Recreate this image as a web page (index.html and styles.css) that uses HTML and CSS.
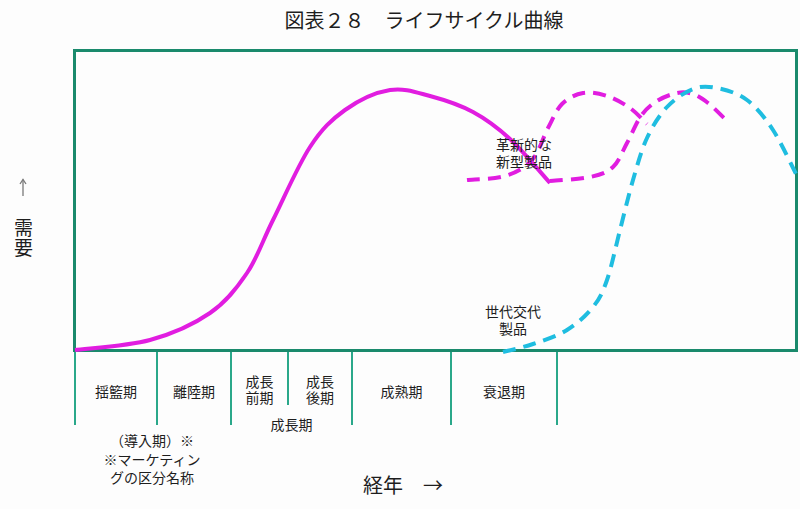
FILE: index.html
```html
<!DOCTYPE html>
<html lang="ja">
<head>
<meta charset="utf-8">
<title>図表２８　ライフサイクル曲線</title>
<link rel="stylesheet" href="styles.css">
</head>
<body>
<div class="page">
  <h1 class="title">図表２８　ライフサイクル曲線</h1>
  <div class="chart-row">
    <div class="yaxis">
      <svg class="yarrow" width="10" height="18" viewBox="0 0 10 18" xmlns="http://www.w3.org/2000/svg">
        <line x1="5" y1="1.5" x2="5" y2="18"/>
        <polyline points="2,6 5,1.5 8,6"/>
      </svg>
      <span class="ylabel">需<br>要</span>
    </div>
    <div class="plot">
      <svg class="curves" width="725" height="303" viewBox="73 49 725 303" xmlns="http://www.w3.org/2000/svg">
        <path class="solid" d="M75,350 C87.5,348.3 127.5,346.2 150,340 C172.5,333.8 193.8,324.2 210,313 C226.2,301.8 236.5,288.5 247,273 C257.5,257.5 262.5,241 273,220 C283.5,199 298,165.3 310,147 C322,128.7 331.7,119.5 345,110 C358.3,100.5 375.8,92.3 390,90 C404.2,87.7 416.2,92.3 430,96 C443.8,99.7 459.7,104.8 473,112 C486.3,119.2 497.2,127.2 510,139 C522.8,150.8 543.3,175.7 550,183"/>
        <path class="dash-m" d="M467,180 C473.3,179.3 494.2,179.3 505,176 C515.8,172.7 524.8,168 532,160 C539.2,152 543,137.3 548,128 C553,118.7 556.2,109.8 562,104 C567.8,98.2 575.5,94.3 583,93 C590.5,91.7 599.2,93.5 607,96 C614.8,98.5 623.3,103.3 630,108 C636.7,112.7 644.2,121.3 647,124"/>
        <path class="dash-m" d="M550,181 C556.7,180.3 579.5,179.3 590,177 C600.5,174.7 606.8,172.7 613,167 C619.2,161.3 622.3,151.5 627,143 C631.7,134.5 636,123 641,116 C646,109 651,104.8 657,101 C663,97.2 671,94.2 677,93 C683,91.8 687.8,92.3 693,94 C698.2,95.7 702.8,99 708,103 C713.2,107 721.3,115.5 724,118"/>
        <path class="dash-c" d="M503,352 C508,350.7 522.3,347.7 533,344 C543.7,340.3 557,336.2 567,330 C577,323.8 586.3,315.3 593,307 C599.7,298.7 602.5,292.8 607,280 C611.5,267.2 615.7,246.7 620,230 C624.3,213.3 628.5,195.3 633,180 C637.5,164.7 641.3,150.2 647,138 C652.7,125.8 659.3,115.2 667,107 C674.7,98.8 684.7,92.2 693,89 C701.3,85.8 708,86.2 717,88 C726,89.8 737.7,93 747,100 C756.3,107 764.5,117 773,130 C781.5,143 793.8,170 798,178"/>
      </svg>
      <div class="tag tag-innov">革新的な<br>新型製品</div>
      <div class="tag tag-gen">世代交代<br>製品</div>
    </div>
  </div>
  <div class="stages">
    <div class="stage stage-cradle">揺籃期</div>
    <div class="stage stage-takeoff">離陸期</div>
    <div class="stage stage-growth">
      <div class="growth-sub">
        <div class="sub sub-early">成長<br>前期</div>
        <div class="sub sub-late">成長<br>後期</div>
      </div>
      <div class="growth-label">成長期</div>
    </div>
    <div class="stage stage-mature">成熟期</div>
    <div class="stage stage-decline">衰退期</div>
  </div>
  <div class="bottom">
    <div class="footnote">（導入期）※<br>※マーケティン<br>グの区分名称</div>
    <div class="xlabel">経年　→</div>
  </div>
</div>
</body>
</html>
```

FILE: styles.css
```css
html, body {
  margin: 0;
  padding: 0;
  background: #ffffff;
}

body {
  font-family: "Noto Sans CJK JP", "Noto Sans", sans-serif;
  color: #222222;
}

.page {
  width: 800px;
  height: 509px;
  overflow: hidden;
  background: #fdfdfd;
}

.title {
  margin: 0;
  height: 49px;
  padding: 7px 0 0 48px;
  box-sizing: border-box;
  font-size: 20px;
  font-weight: normal;
  line-height: 26px;
  text-align: center;
  color: #1e1e1e;
}

.chart-row {
  display: flex;
  height: 303px;
}

.yaxis {
  width: 73px;
  display: flex;
  flex-direction: column;
  align-items: flex-start;
  padding: 129px 0 0 14px;
  box-sizing: border-box;
}

.yarrow {
  display: block;
  margin-left: 4px;
  fill: none;
  stroke: #7a7a7a;
  stroke-width: 1.3;
}

.ylabel {
  margin-top: 21px;
  font-size: 19px;
  line-height: 20px;
  color: #1e1e1e;
}

.plot {
  position: relative;
  width: 725px;
  height: 303px;
  border: 3px solid #1a8a6c;
  box-sizing: border-box;
}

.curves {
  position: absolute;
  left: -3px;
  top: -3px;
  overflow: visible;
}

.curves path {
  fill: none;
  stroke-width: 4;
  stroke-linecap: butt;
}

.curves .solid {
  stroke: #e11de0;
}

.curves .dash-m {
  stroke: #e11de0;
  stroke-dasharray: 13 8;
}

.curves .dash-c {
  stroke: #1fbde0;
  stroke-dasharray: 13 8;
}

.tag {
  position: absolute;
  font-size: 14px;
  line-height: 17px;
  text-align: center;
  color: #1e1e1e;
}

.tag-innov {
  left: 420px;
  top: 84px;
}

.tag-gen {
  left: 409px;
  top: 251px;
}

.stages {
  display: flex;
  margin-left: 74px;
  height: 73px;
}

.stage {
  border-left: 2px solid #2aa88a;
  box-sizing: border-box;
  display: flex;
  align-items: center;
  justify-content: center;
  padding-top: 5px;
  font-size: 14px;
  line-height: 17px;
  color: #1e1e1e;
}

.stage-cradle { width: 82px; }
.stage-takeoff { width: 74px; }
.stage-mature { width: 99px; }
.stage-decline {
  width: 108px;
  border-right: 2px solid #2aa88a;
}

.stage-growth {
  width: 121px;
  flex-direction: column;
  align-items: stretch;
  justify-content: flex-start;
  padding-top: 0;
}

.growth-sub {
  display: flex;
  height: 56px;
}

.sub {
  box-sizing: border-box;
  padding-top: 21px;
  text-align: center;
  line-height: 16px;
}

.sub-early { width: 55px; }

.sub-late {
  width: 64px;
  border-left: 2px solid #2aa88a;
}

.growth-label {
  margin-top: 11px;
  text-align: center;
  line-height: 16px;
}

.bottom {
  display: flex;
  align-items: flex-start;
}

.footnote {
  margin-left: 74px;
  width: 156px;
  margin-top: 6px;
  font-size: 14px;
  line-height: 18.5px;
  text-align: center;
  color: #1e1e1e;
}

.xlabel {
  margin-left: 133px;
  margin-top: 48px;
  font-size: 20px;
  line-height: 24px;
  color: #1e1e1e;
}
```
